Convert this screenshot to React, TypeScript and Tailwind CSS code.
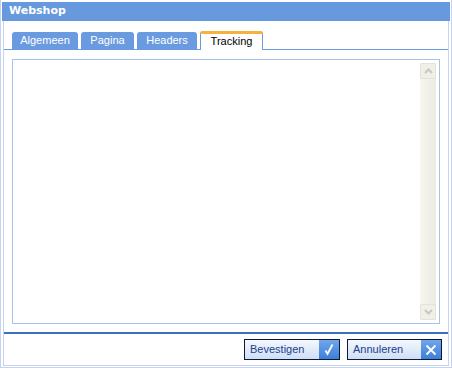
import React from 'react'

const tabs = [
  { label: 'Algemeen', w: 'w-[66px]' },
  { label: 'Pagina', w: 'w-[53px]' },
  { label: 'Headers', w: 'w-[60px]' },
  { label: 'Tracking', w: 'w-[63px]' },
]

function Tab({ label, w, active }: { label: string; w: string; active?: boolean }) {
  if (active) {
    return (
      <div className={`relative -mb-px flex h-[19px] items-center justify-center rounded-t-[3px] border-x border-[#6a9be0] bg-white text-black ${w}`}>
        <div className="absolute -left-px -right-px top-0 h-[3px] rounded-t-[3px] bg-[#f8b040]" />
        <span className="pt-[2px]">{label}</span>
      </div>
    )
  }
  return (
    <div className={`flex h-[17px] items-center justify-center rounded-t-[3px] bg-[#6a9be0] text-white ${w}`}>
      {label}
    </div>
  )
}

function DialogButton({ label, icon }: { label: string; icon: 'check' | 'close' }) {
  return (
    <button className="flex h-[21px] w-full items-stretch border border-[#0c1a36] bg-gradient-to-b from-[#f4f8fe] to-[#cfdef6] p-0 text-left text-[11px] text-[#1b3f8a]">
      <span className="flex flex-1 items-center pl-[5px]">{label}</span>
      <span className="flex w-[20px] items-center justify-center bg-gradient-to-b from-[#70a6ea] to-[#3c7fd9]">
        {icon === 'check' ? (
          <svg width="12" height="13" viewBox="0 0 12 13">
            <path d="M2.5 7.5 L4.5 11 L9.5 1.5" fill="none" stroke="white" strokeWidth="1.8" />
          </svg>
        ) : (
          <svg width="12" height="12" viewBox="0 0 12 12">
            <path d="M1.5 1.5 L10.5 10.5 M10.5 1.5 L1.5 10.5" fill="none" stroke="white" strokeWidth="1.8" />
          </svg>
        )}
      </span>
    </button>
  )
}

export default function App() {
  return (
    <div className="h-[368px] w-[452px] border-x border-b border-[#c6d3f0] bg-white px-px pb-px font-['Liberation_Sans',sans-serif] text-[11px]">
      <div className="flex h-full flex-col pt-[2px]">
        {/* Title */}
        <div className="flex h-[19px] items-center bg-[#6699dd] pl-[7px] font-['DejaVu_Sans',sans-serif] text-[11px] font-bold text-white">
          Webshop
        </div>

        <div className="mx-px flex flex-1 flex-col border-x border-b border-[#c6d3f0]">
          {/* Tabs */}
          <div className="mt-[10px] flex items-end gap-[3px] border-b border-[#6a9be0] pl-[8px]">
            {tabs.map(t => (
              <Tab key={t.label} label={t.label} w={t.w} active={t.label === 'Tracking'} />
            ))}
          </div>

          {/* Content */}
          <div className="mx-[8px] mt-[9px] flex h-[265px] justify-end border border-[#a9c2ea] p-[3px]">
            <div className="flex w-[16px] flex-col bg-gradient-to-r from-[#f7f6ef] to-[#ecebe2]">
              <div className="flex h-[16px] items-center justify-center rounded-[2px] border border-[#e4e3da] bg-[#f1f0e8]">
                <svg width="9" height="6" viewBox="0 0 9 6">
                  <path d="M1 5 L4.5 1.5 L8 5" fill="none" stroke="#c9c8bd" strokeWidth="2" />
                </svg>
              </div>
              <div className="flex-1" />
              <div className="flex h-[16px] items-center justify-center rounded-[2px] border border-[#e4e3da] bg-[#f1f0e8]">
                <svg width="9" height="6" viewBox="0 0 9 6">
                  <path d="M1 1 L4.5 4.5 L8 1" fill="none" stroke="#c9c8bd" strokeWidth="2" />
                </svg>
              </div>
            </div>
          </div>

          <div className="mt-[8px] h-[2px] bg-[#3c6fbf]" />

          {/* Buttons */}
          <div className="mt-[5px] flex justify-end gap-[7px] pr-[6px]">
            <div className="w-[96px]">
              <DialogButton label="Bevestigen" icon="check" />
            </div>
            <div className="w-[95px]">
              <DialogButton label="Annuleren" icon="close" />
            </div>
          </div>
        </div>
      </div>
    </div>
  )
}
